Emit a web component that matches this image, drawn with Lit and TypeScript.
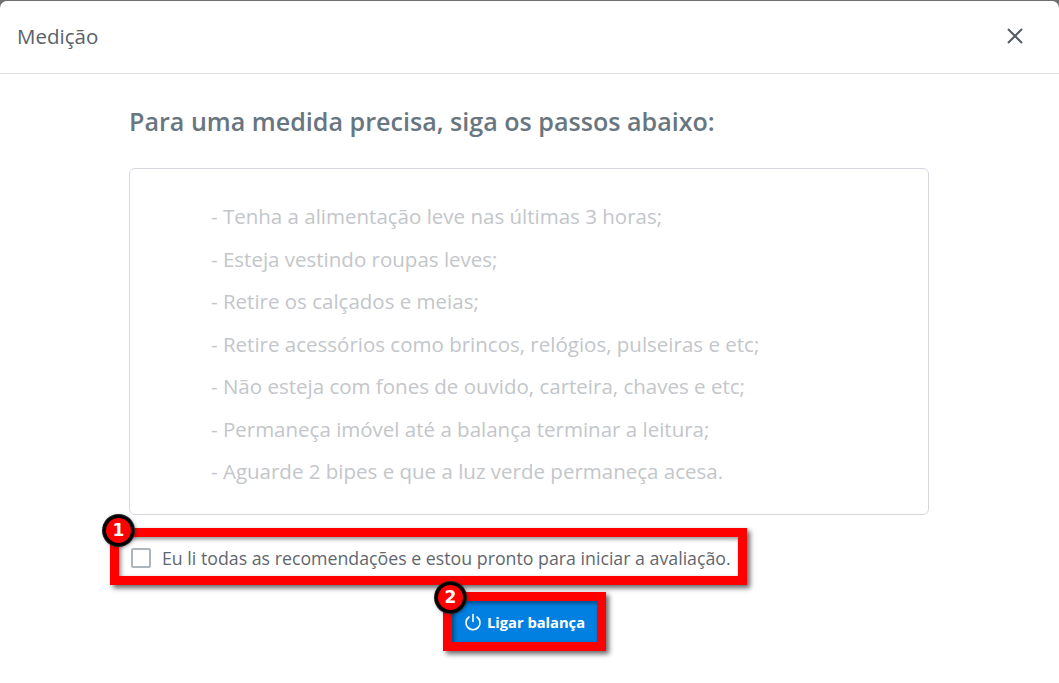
import {LitElement, css, html} from 'lit';
import {customElement} from 'lit/decorators.js';

const STEPS = [
  '- Tenha a alimentação leve nas últimas 3 horas;',
  '- Esteja vestindo roupas leves;',
  '- Retire os calçados e meias;',
  '- Retire acessórios como brincos, relógios, pulseiras e etc;',
  '- Não esteja com fones de ouvido, carteira, chaves e etc;',
  '- Permaneça imóvel até a balança terminar a leitura;',
  '- Aguarde 2 bipes e que a luz verde permaneça acesa.',
];

@customElement('app-root')
export class AppRoot extends LitElement {
  static styles = css`
    :host {
      display: block;
      height: 683px;
      background-color: #707070;
      padding-top: 1px;
      box-sizing: border-box;
      font-family: 'Open Sans', 'Liberation Sans', sans-serif;
    }

    .modal {
      height: 682px;
      background-color: white;
      border-radius: 7px 7px 0 0;
      overflow: hidden;
    }

    .modal-header {
      height: 73px;
      box-sizing: border-box;
      border-bottom: 1px solid #dee2e6;
      padding: 0 35px 2px 17px;
      display: flex;
      justify-content: space-between;
      align-items: center;
    }

    .modal-title {
      margin: 0;
      font-size: 20.5px;
      font-weight: 400;
      color: #5a6068;
    }

    .modal-close {
      display: block;
      width: 18px;
      height: 18px;
    }

    .modal-body {
      width: 800px;
      margin-left: 129px;
    }

    .heading {
      margin: 28px 0 28px;
      height: 38px;
      line-height: 38px;
      font-size: 25.1px;
      font-weight: 600;
      color: #68767f;
      white-space: nowrap;
    }

    .steps {
      height: 347px;
      box-sizing: border-box;
      border: 1px solid #d6d6e0;
      border-radius: 6px;
      padding: 26px 0 0 81px;
      margin: 0 0 22px;
      list-style: none;
    }

    .steps li {
      height: 42.5px;
      line-height: 42.5px;
      font-size: 20.5px;
      color: #c3c6ca;
      white-space: nowrap;
    }

    .consent {
      position: relative;
      display: flex;
      align-items: center;
      width: 610px;
      height: 39px;
      margin-left: 2px;
      gap: 11px;
      font-size: 17.75px;
      color: #62676e;
      white-space: nowrap;
    }

    .consent-text {
      padding-top: 3px;
    }

    .checkbox {
      width: 20px;
      height: 20px;
      box-sizing: border-box;
      border: 2px solid #adb5bd;
      border-radius: 2px;
      background-color: white;
      flex: none;
      margin-top: 3px;
    }

    .highlight {
      position: absolute;
      border: 9px solid #ff0000;
      box-shadow: 3px 3px 5px rgb(0 0 0 / 0.6), inset 2px 2px 4px rgb(0 0 0 / 0.45);
      pointer-events: none;
    }

    .consent .highlight {
      inset: -9px -6px -9px -21px;
    }

    .badge {
      position: absolute;
      width: 31px;
      height: 31px;
      box-sizing: border-box;
      border: 3px solid #000;
      border-radius: 50%;
      background-color: #ff0000;
      color: white;
      font-family: 'DejaVu Sans', sans-serif;
      font-size: 17px;
      font-weight: 700;
      line-height: 25px;
      text-align: center;
      box-shadow: 0 0 0 1px #222, 1px 1px 4px rgb(0 0 0 / 0.5);
    }

    .consent .badge {
      left: -28px;
      top: -22px;
    }

    .action {
      display: flex;
      justify-content: flex-start;
      margin-top: 25px;
      padding-left: 323px;
    }

    .button-wrap {
      position: relative;
    }

    .button-wrap .highlight {
      inset: -9px;
    }

    .button-wrap .badge {
      left: -17px;
      top: -19px;
    }

    .power-button {
      display: flex;
      align-items: center;
      gap: 5px;
      width: 145px;
      height: 41px;
      box-sizing: border-box;
      padding: 0 0 0 12px;
      border: none;
      background-color: #0280e1;
      color: white;
      font-family: 'Open Sans', sans-serif;
      font-size: 14.7px;
      font-weight: 700;
      white-space: nowrap;
    }
  `;

  render() {
    return html`
      <div class="modal">
        <div class="modal-header">
          <h5 class="modal-title">Medição</h5>
          <svg class="modal-close" viewBox="0 0 18 18" fill="none" stroke="#555b62" stroke-width="2">
            <path d="M2 2 L16 16 M16 2 L2 16"></path>
          </svg>
        </div>
        <div class="modal-body">
          <h4 class="heading">Para uma medida precisa, siga os passos abaixo:</h4>
          <ul class="steps">
            ${STEPS.map((step) => html`<li>${step}</li>`)}
          </ul>
          <label class="consent">
            <span class="checkbox"></span>
            <span class="consent-text">Eu li todas as recomendações e estou pronto para iniciar a avaliação.</span>
            <span class="highlight"></span>
            <span class="badge">1</span>
          </label>
          <div class="action">
            <div class="button-wrap">
              <button class="power-button">
                <svg width="18" height="18" viewBox="0 0 18 18" fill="none" stroke="white" stroke-width="1.6" stroke-linecap="round">
                  <path d="M9 1.5 V8.5"></path>
                  <path d="M5 4 A7 7 0 1 0 13 4"></path>
                </svg>
                Ligar balança
              </button>
              <span class="highlight"></span>
              <span class="badge">2</span>
            </div>
          </div>
        </div>
      </div>
    `;
  }
}
